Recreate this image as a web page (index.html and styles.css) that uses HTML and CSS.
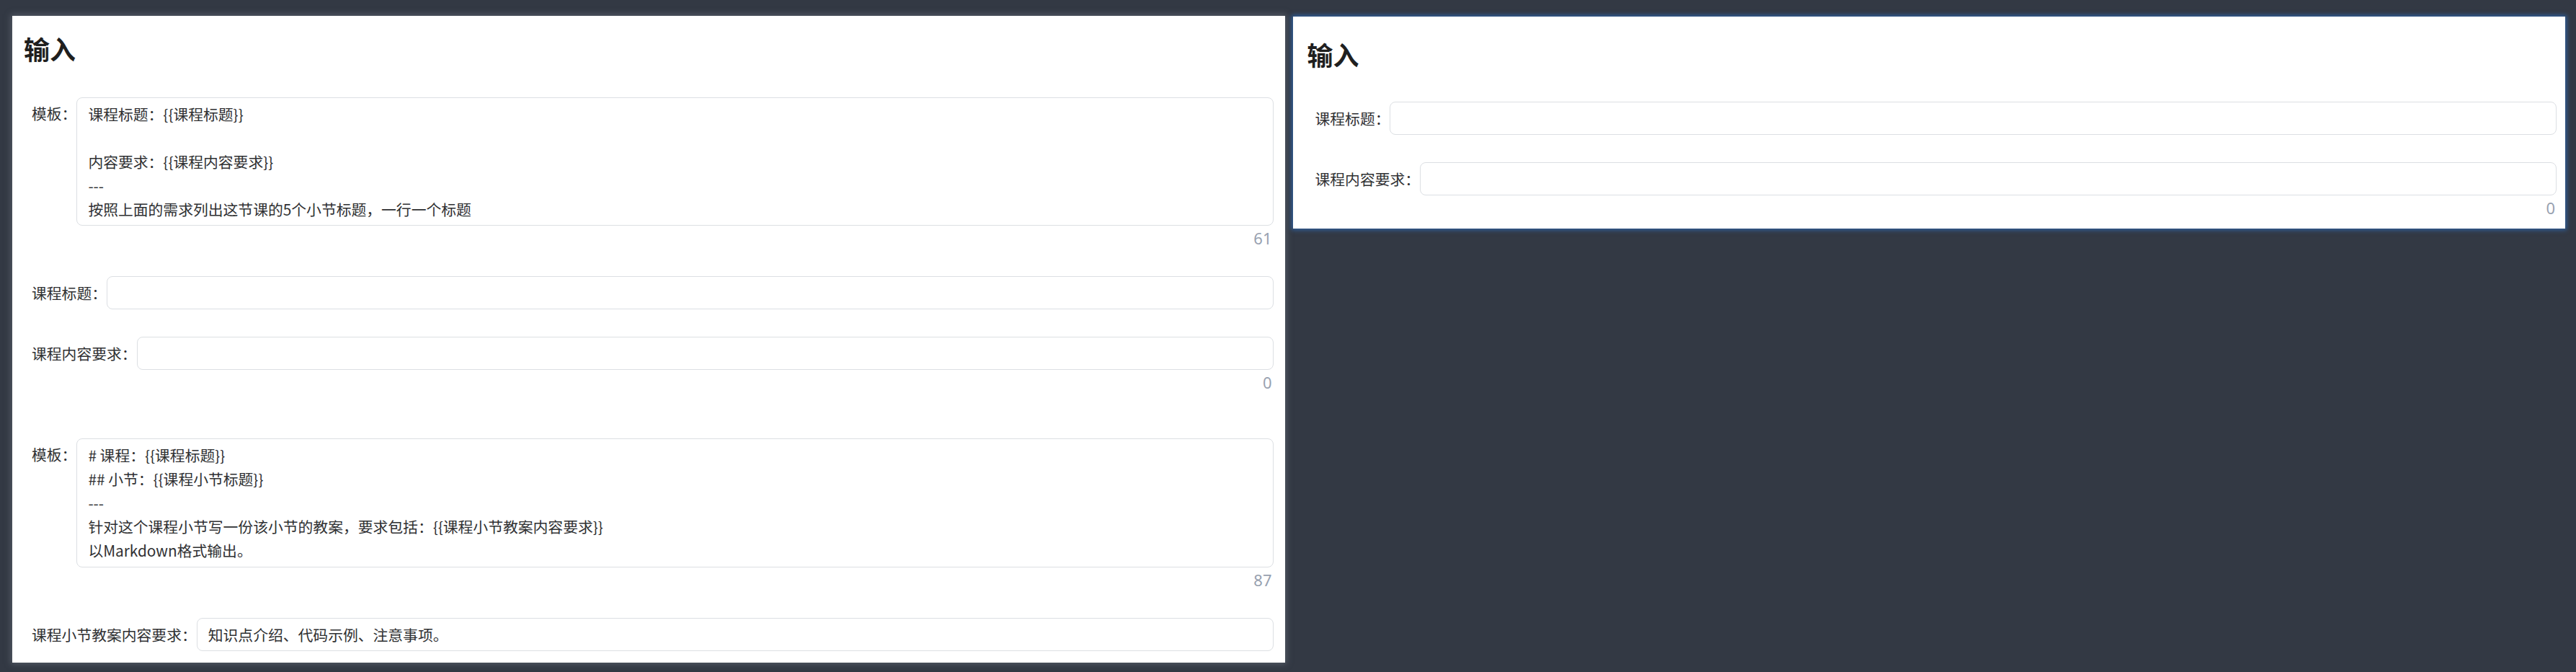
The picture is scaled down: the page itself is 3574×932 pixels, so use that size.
FILE: index.html
```html
<!DOCTYPE html>
<html lang="zh-CN">
<head>
<meta charset="utf-8">
<title>输入</title>
<link rel="stylesheet" href="styles.css">
</head>
<body>
<div class="page">
  <section class="panel panel--main">
    <h2 class="panel__title">输入</h2>
    <div class="group">
      <div class="field field--multiline">
        <label class="field__label">模板：</label>
        <div class="field__body">
          <textarea class="field__textarea" readonly>课程标题：{{课程标题}}

内容要求：{{课程内容要求}}
---
按照上面的需求列出这节课的5个小节标题，一行一个标题</textarea>
          <div class="field__counter">61</div>
        </div>
      </div>
      <div class="field">
        <label class="field__label">课程标题：</label>
        <div class="field__body">
          <input class="field__input" type="text" value="">
        </div>
      </div>
      <div class="field">
        <label class="field__label">课程内容要求：</label>
        <div class="field__body">
          <input class="field__input" type="text" value="">
          <div class="field__counter">0</div>
        </div>
      </div>
    </div>
    <div class="group">
      <div class="field field--multiline">
        <label class="field__label">模板：</label>
        <div class="field__body">
          <textarea class="field__textarea field__textarea--tall" readonly># 课程：{{课程标题}}
## 小节：{{课程小节标题}}
---
针对这个课程小节写一份该小节的教案，要求包括：{{课程小节教案内容要求}}
以Markdown格式输出。</textarea>
          <div class="field__counter">87</div>
        </div>
      </div>
      <div class="field">
        <label class="field__label">课程小节教案内容要求：</label>
        <div class="field__body">
          <input class="field__input" type="text" value="知识点介绍、代码示例、注意事项。">
        </div>
      </div>
    </div>
  </section>

  <section class="panel panel--active">
    <h2 class="panel__title">输入</h2>
    <div class="group">
      <div class="field">
        <label class="field__label">课程标题：</label>
        <div class="field__body">
          <input class="field__input" type="text" value="">
        </div>
      </div>
      <div class="field">
        <label class="field__label">课程内容要求：</label>
        <div class="field__body">
          <input class="field__input" type="text" value="">
          <div class="field__counter">0</div>
        </div>
      </div>
    </div>
  </section>
</div>
</body>
</html>
```

FILE: styles.css
```css
* {
  box-sizing: border-box;
}

html, body {
  margin: 0;
  background: #333944;
}

body {
  font-family: "Noto Sans CJK SC", "Noto Sans", sans-serif;
  font-size: 20.8px;
  color: #303133;
}

.page {
  display: grid;
  grid-template-columns: 1fr 1fr;
  column-gap: 11px;
  align-items: start;
  padding: 22px 15px 0 17px;
  min-height: 932px;
}

.panel {
  background: #ffffff;
  padding: 20px 16px 16px 16px;
}

.panel--main {
  box-shadow: 0 0 8px 2px rgba(110, 116, 128, 0.55);
}

.panel--active {
  margin-top: 1px;
  padding: 27px 12px 14px 20px;
  box-shadow: 0 0 6px 2px rgba(45, 110, 190, 0.75);
}

.panel__title {
  margin: 0 0 43px 0;
  font-size: 36px;
  line-height: 50px;
  font-weight: 700;
  color: #1f1f1f;
}

.panel--active .panel__title {
  margin-bottom: 41px;
}

.group {
  margin-left: 11px;
}

.group + .group {
  margin-top: 63px;
}

.field {
  display: flex;
  align-items: flex-start;
  margin-bottom: 38px;
}

.field:last-child {
  margin-bottom: 0;
}

.field__label {
  flex: none;
  line-height: 46px;
  white-space: nowrap;
  color: #303133;
}

.field--multiline .field__label {
  line-height: 33px;
  padding-top: 6px;
}

.field__body {
  flex: 1;
  min-width: 0;
}

.field__input,
.field__textarea {
  display: block;
  width: 100%;
  margin: 0;
  border: 1px solid #dcdfe3;
  border-radius: 8px;
  background: #ffffff;
  font-family: inherit;
  font-size: 20.8px;
  color: #303133;
  outline: none;
}

.field__input {
  height: 46px;
  padding: 0 15px;
}

.field__textarea {
  height: 178px;
  padding: 6px 15px 4px 15px;
  line-height: 33px;
  resize: none;
  overflow: hidden;
  white-space: pre-wrap;
}

.field__textarea--tall {
  height: 179px;
}

.field__counter {
  margin-top: 2px;
  padding-right: 2px;
  line-height: 30px;
  text-align: right;
  font-family: "Noto Sans", sans-serif;
  font-size: 22px;
  color: #98a1b0;
}
```
